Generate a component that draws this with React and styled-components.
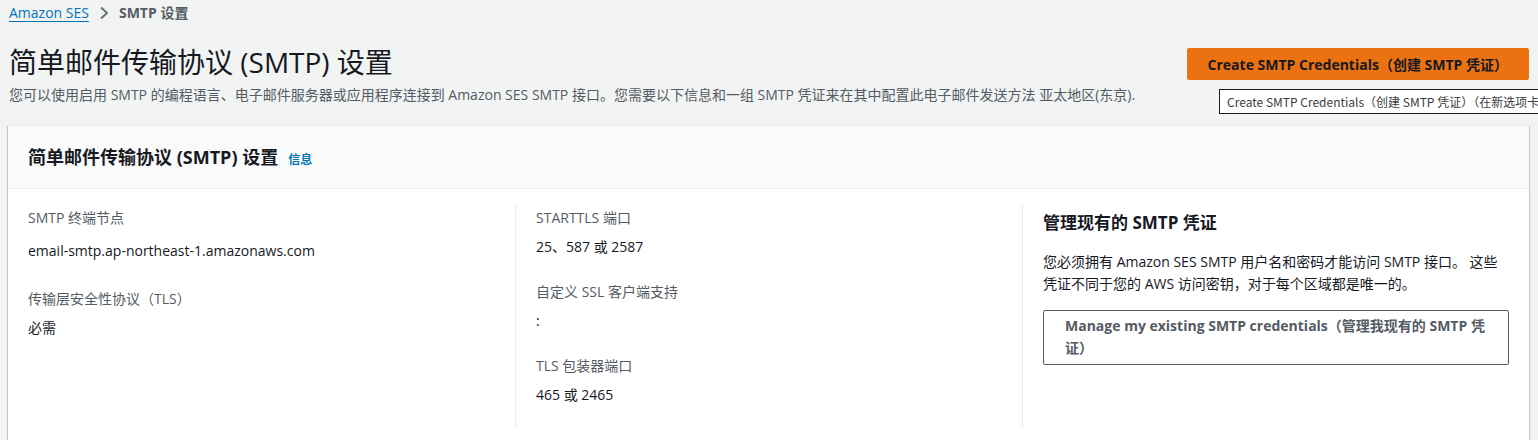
import React from "react";
import styled, { createGlobalStyle } from "styled-components";

const Global = createGlobalStyle`
  html, body { margin: 0; padding: 0; background: #f2f3f3; overflow: hidden; }
  body {
    font-family: "Open Sans", "Noto Sans CJK SC", sans-serif;
    font-size: 14px;
    color: #16191f;
  }
  * { box-sizing: border-box; }
`;

const Page = styled.div`
  padding: 2px 9px 0 8px;
  width: 1538px;
  height: 440px;
  position: relative;
`;

const Breadcrumbs = styled.nav`
  display: flex;
  align-items: center;
  gap: 10px;
  height: 22px;
  line-height: 22px;
  padding-left: 1px;
`;

const Crumb = styled.a`
  color: #0073bb;
  text-decoration: underline;
  text-underline-offset: 3px;
`;

const Current = styled.span`
  color: #545b64;
  font-weight: 700;
`;

const HeaderRow = styled.header`
  display: flex;
  justify-content: space-between;
  align-items: flex-start;
  margin-top: 20px;
  position: relative;
`;

const TitleBlock = styled.div`
  display: flex;
  flex-direction: column;
  padding-left: 1px;
`;

const Title = styled.h1`
  margin: 0;
  font-size: 28px;
  line-height: 36px;
  font-weight: 400;
  color: #16191f;
`;

const Description = styled.p`
  margin: 4px 0 0;
  font-size: 14px;
  line-height: 22px;
  color: #545b64;
`;

const PrimaryButton = styled.button`
  font-family: inherit;
  margin-top: 4px;
  height: 32px;
  padding: 0 20px;
  background: #ec7211;
  border: 1px solid #ec7211;
  border-radius: 2px;
  color: #16191f;
  font-size: 14px;
  font-weight: 700;
  cursor: pointer;
`;

const Tooltip = styled.div`
  position: absolute;
  left: 1211px;
  top: 45px;
  height: 25px;
  padding: 0 7px;
  white-space: nowrap;
  background: #fff;
  border: 1px solid #1a1a1a;
  font-family: "Noto Sans CJK SC", sans-serif;
  font-size: 12px;
  line-height: 23px;
  color: #3c3c3c;
`;

const Card = styled.section`
  margin-top: 19px;
  background: #fff;
  border-top: 1px solid #eaeded;
  box-shadow: 0 1px 1px 0 rgba(0, 28, 36, 0.3), 1px 1px 1px 0 rgba(0, 28, 36, 0.15),
    -1px 1px 1px 0 rgba(0, 28, 36, 0.15);
`;

const CardHeader = styled.div`
  display: flex;
  align-items: center;
  gap: 10px;
  background: #fafafa;
  border-bottom: 1px solid #eaeded;
  padding: 19px 20px 19px 20px;
`;

const CardTitle = styled.h2`
  margin: 0;
  font-size: 18px;
  line-height: 24px;
  font-weight: 700;
  color: #16191f;
`;

const InfoLink = styled.a`
  color: #0073bb;
  font-size: 12px;
  font-weight: 700;
  margin-top: 3px;
  text-decoration: none;
`;

const CardBody = styled.div`
  display: grid;
  grid-template-columns: repeat(3, 1fr);
  padding: 16px 0 20px;
`;

const Column = styled.div`
  padding: 2px 20px 0;
  border-left: ${(p) => (p.$divider ? "1px solid #eaeded" : "none")};
  min-height: 202px;
`;

const Field = styled.div`
  margin-bottom: 23px;
`;

const Label = styled.div`
  color: #545b64;
  line-height: 22px;
  margin-bottom: ${(p) => (p.$tall ? "11px" : "7px")};
`;

const Value = styled.div`
  color: #16191f;
  line-height: 22px;
  padding-bottom: ${(p) => (p.$tall ? "3px" : "0")};
`;

const SubHeading = styled.h3`
  margin: 4px 0 0;
  font-size: 17px;
  line-height: 24px;
  font-weight: 700;
`;

const Paragraph = styled.p`
  margin: 16px 0 0;
  line-height: 22px;
  color: #16191f;
`;

const NormalButton = styled.button`
  font-family: inherit;
  margin-top: 15px;
  width: 100%;
  text-align: left;
  padding: 4px 18px 5px 21px;
  background: #fff;
  border: 1px solid #545b64;
  border-radius: 2px;
  color: #545b64;
  font-size: 14px;
  line-height: 22px;
  font-weight: 700;
  cursor: pointer;
`;

const Chevron = () => (
  <svg width="10" height="14" viewBox="0 0 10 14" fill="none">
    <path d="M2 1.5 L8 7 L2 12.5" stroke="#687078" strokeWidth="2" />
  </svg>
);

export default function App() {
  return (
    <>
      <Global />
      <Page>
        <Breadcrumbs>
          <Crumb href="#">Amazon SES</Crumb>
          <Chevron />
          <Current>SMTP 设置</Current>
        </Breadcrumbs>
        <HeaderRow>
          <TitleBlock>
            <Title>简单邮件传输协议 (SMTP) 设置</Title>
            <Description>
              您可以使用启用 SMTP 的编程语言、电子邮件服务器或应用程序连接到 Amazon SES SMTP
              接口。您需要以下信息和一组 SMTP 凭证来在其中配置此电子邮件发送方法 亚太地区(东京).
            </Description>
          </TitleBlock>
          <PrimaryButton>Create SMTP Credentials（创建 SMTP 凭证）</PrimaryButton>
          <Tooltip>Create SMTP Credentials（创建 SMTP 凭证）（在新选项卡中打开）</Tooltip>
        </HeaderRow>
        <Card>
          <CardHeader>
            <CardTitle>简单邮件传输协议 (SMTP) 设置</CardTitle>
            <InfoLink href="#">信息</InfoLink>
          </CardHeader>
          <CardBody>
            <Column>
              <Field>
                <Label $tall>SMTP 终端节点</Label>
                <Value $tall>email-smtp.ap-northeast-1.amazonaws.com</Value>
              </Field>
              <Field>
                <Label>传输层安全性协议（TLS）</Label>
                <Value>必需</Value>
              </Field>
            </Column>
            <Column $divider>
              <Field>
                <Label>STARTTLS 端口</Label>
                <Value>25、587 或 2587</Value>
              </Field>
              <Field>
                <Label>自定义 SSL 客户端支持</Label>
                <Value>:</Value>
              </Field>
              <Field>
                <Label>TLS 包装器端口</Label>
                <Value>465 或 2465</Value>
              </Field>
            </Column>
            <Column $divider>
              <SubHeading>管理现有的 SMTP 凭证</SubHeading>
              <Paragraph>
                您必须拥有 Amazon SES SMTP 用户名和密码才能访问 SMTP 接口。 这些凭证不同于您的 AWS
                访问密钥，对于每个区域都是唯一的。
              </Paragraph>
              <NormalButton>Manage my existing SMTP credentials（管理我现有的 SMTP 凭证）</NormalButton>
            </Column>
          </CardBody>
        </Card>
      </Page>
    </>
  );
}
